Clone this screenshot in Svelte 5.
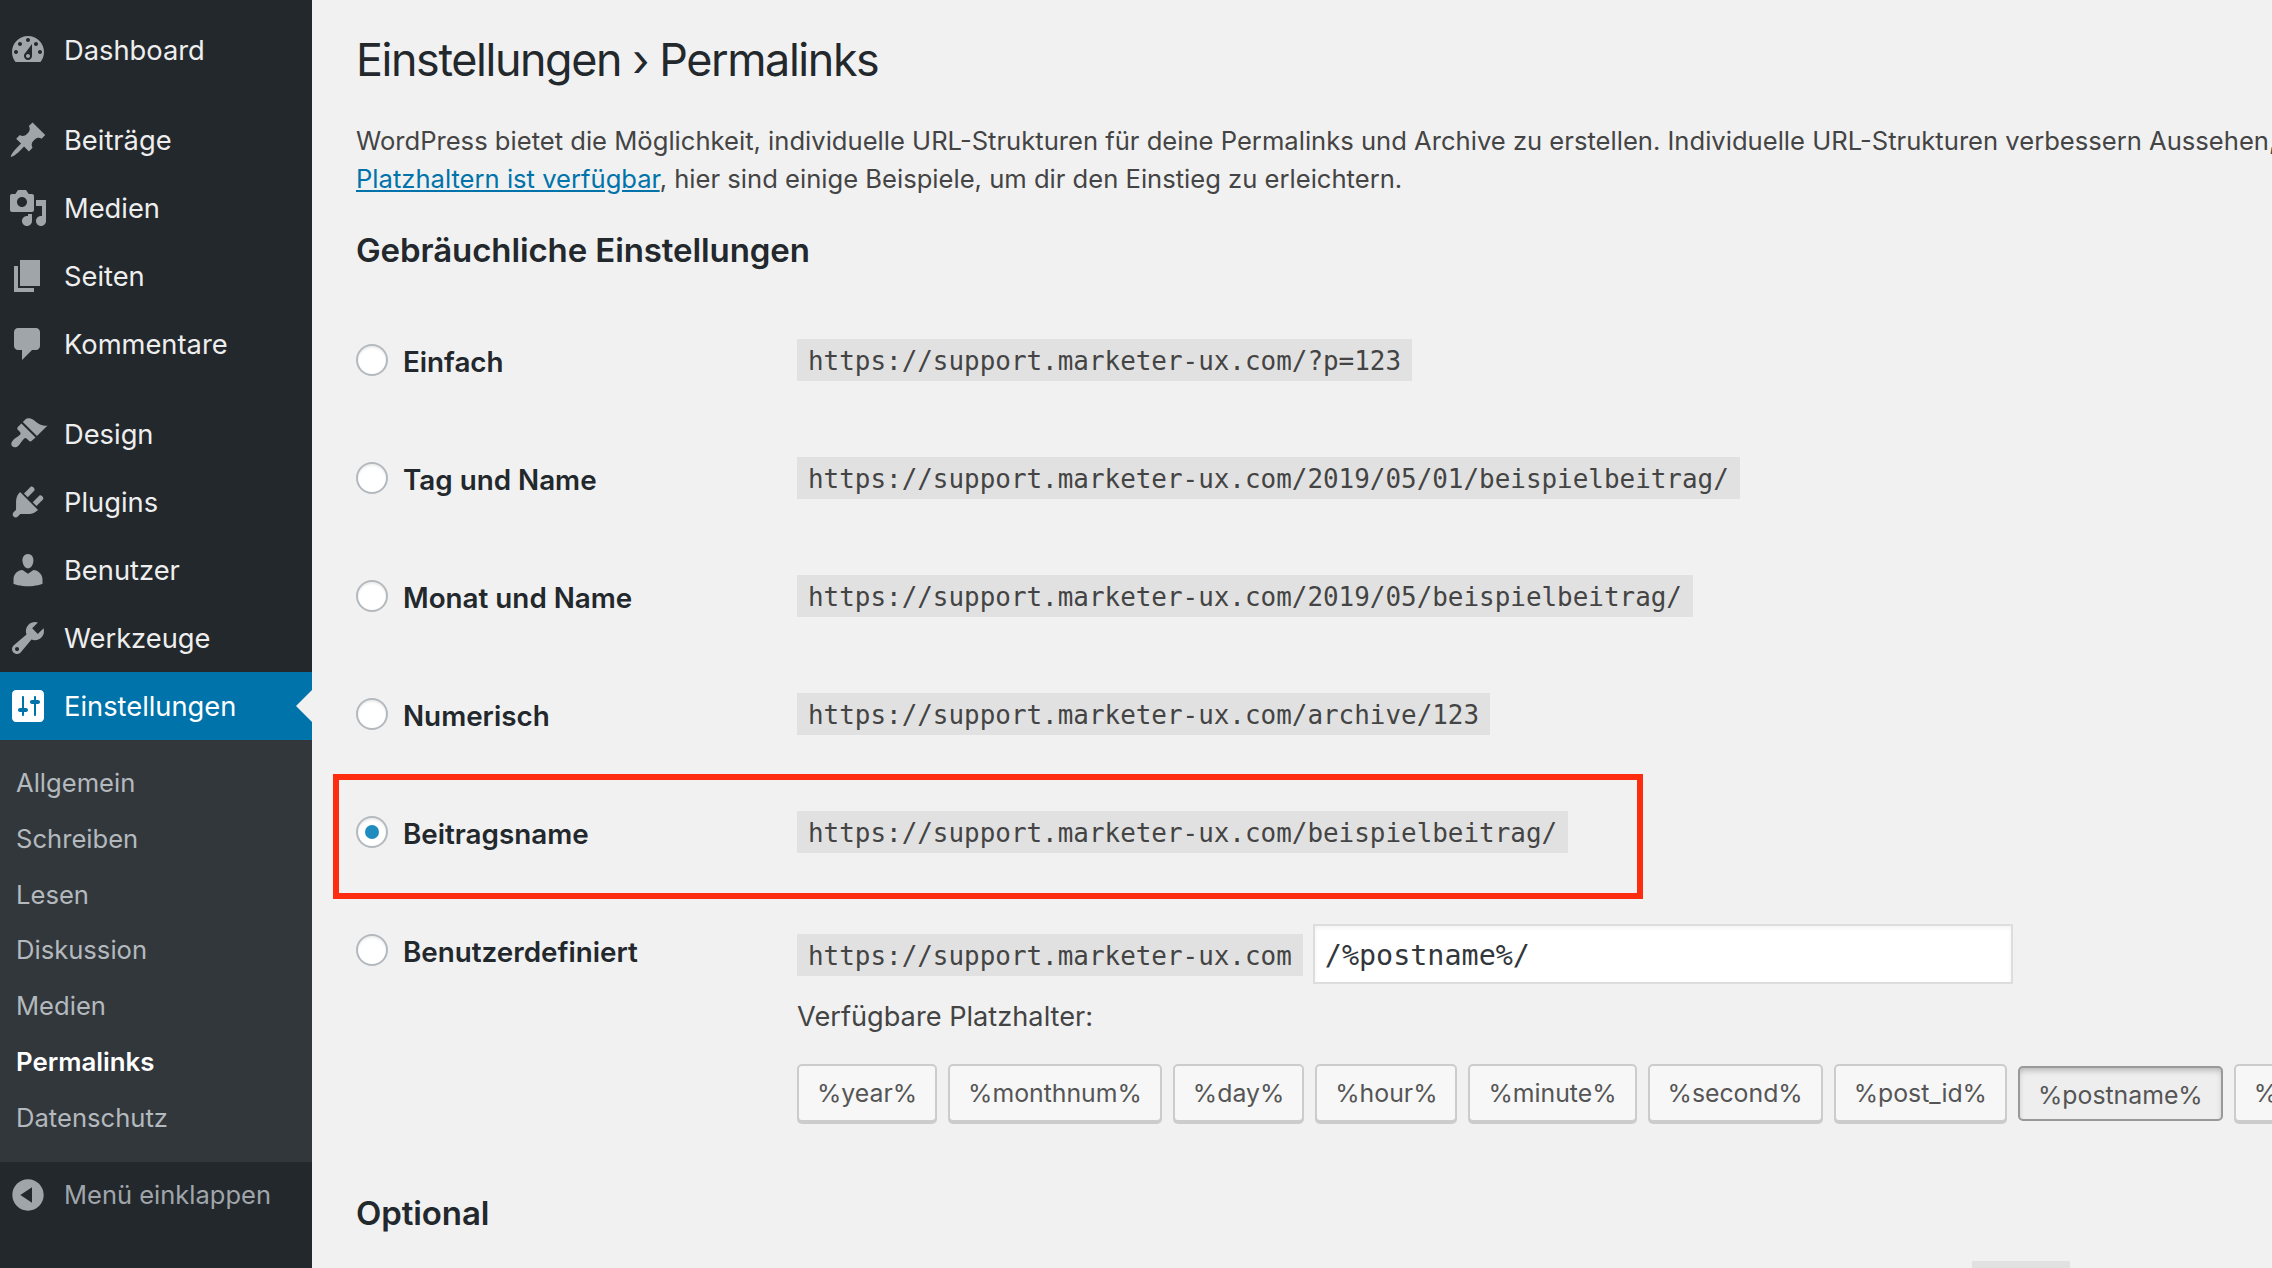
<script>
  const icons = {
    dashboard: 'M3.76 16h12.48c1.1-1.37 1.76-3.11 1.76-5 0-4.42-3.58-8-8-8s-8 3.58-8 8c0 1.89.66 3.63 1.76 5zM10 4c.55 0 1 .45 1 1s-.45 1-1 1-1-.45-1-1 .45-1 1-1zM6 6c.55 0 1 .45 1 1s-.45 1-1 1-1-.45-1-1 .45-1 1-1zm8 0c.55 0 1 .45 1 1s-.45 1-1 1-1-.45-1-1 .45-1 1-1zm-5.37 5.55L12 7v6c0 1.1-.9 2-2 2s-2-.9-2-2c0-.57.24-1.08.63-1.45zM4 10c.55 0 1 .45 1 1s-.45 1-1 1-1-.45-1-1 .45-1 1-1zm12 0c.55 0 1 .45 1 1s-.45 1-1 1-1-.45-1-1 .45-1 1-1zm-5 3c0-.55-.45-1-1-1s-1 .45-1 1 .45 1 1 1 1-.45 1-1z',
    post: 'M10.44 3.02l1.82-1.82 6.36 6.35-1.83 1.82c-1.05-.68-2.48-.57-3.41.36l-.75.75c-.92.93-1.04 2.35-.35 3.41l-1.83 1.82-2.41-2.41-2.8 2.79c-.42.42-3.38 2.71-3.8 2.29s1.86-3.39 2.28-3.81l2.79-2.79L4.1 9.36l1.83-1.82c1.05.69 2.48.57 3.4-.36l.75-.75c.93-.92 1.05-2.35.36-3.41z',
    media: 'M13 11V4c0-.55-.45-1-1-1h-1.67L9 1H5L3.67 3H2c-.55 0-1 .45-1 1v7c0 .55.45 1 1 1h10c.55 0 1-.45 1-1zM7 4.5c1.38 0 2.5 1.12 2.5 2.5S8.38 9.5 7 9.5 4.5 8.38 4.5 7 5.62 4.5 7 4.5zM14 6h5v10.5c0 1.38-1.12 2.5-2.5 2.5S14 17.88 14 16.5s1.12-2.5 2.5-2.5c.17 0 .34.02.5.05V9h-3V6zm-4 8.05V13h2v3.5c0 1.38-1.12 2.5-2.5 2.5S7 17.88 7 16.5 8.12 14 9.5 14c.17 0 .34.02.5.05z',
    page: 'M6 15V2h10v13H6zm-1 1h8v2H3V5h2v11z',
    comments: 'M5 2h9c1.1 0 2 .9 2 2v7c0 1.1-.9 2-2 2h-2l-5 5v-5H5c-1.1 0-2-.9-2-2V4c0-1.1.9-2 2-2z',
    appearance: 'M14.48 11.06L7.41 3.99l1.5-1.5c.5-.56 2.3-.47 3.51.32 1.21.8 1.43 1.28 2.91 2.1 1.18.64 2.45 1.26 4.45.85zm-.71.71L6.7 4.7 4.93 6.47c-.39.39-.39 1.02 0 1.41l1.06 1.06c.39.39.39 1.03 0 1.42-.6.6-1.43 1.11-2.21 1.69-.35.26-.7.53-1.01.84-1.34 1.34-1.34 2.54-.6 3.28.74.74 1.94.74 3.28-.6.31-.31.58-.66.84-1.01.58-.78 1.09-1.61 1.69-2.21.39-.39 1.03-.39 1.42 0l1.06 1.06c.39.39 1.02.39 1.41 0z',
    plugins: 'M13.11 4.36L9.87 7.6 8 5.73l3.24-3.24c.35-.34 1.05-.2 1.56.32.52.51.66 1.21.31 1.55zm-8 1.77l.91-1.12 9.01 9.01-1.19.84c-.71.71-2.63 1.16-3.82 1.16H6.14L4.9 17.26c-.59.59-1.54.59-2.12 0-.59-.58-.59-1.53 0-2.12l1.24-1.24v-3.88c0-1.13.4-3.19 1.09-3.89zm7.26 3.97l3.24-3.24c.34-.35 1.04-.21 1.55.31.52.51.66 1.21.31 1.55l-3.24 3.25z',
    users: 'M10 9.25c-2.27 0-2.73-3.44-2.73-3.44C7 4.02 7.82 2 9.97 2c2.16 0 2.98 2.02 2.71 3.81 0 0-.41 3.44-2.68 3.44zm0 2.57L12.72 10c2.39 0 4.52 2.33 4.52 4.53v2.49s-3.65 1.13-7.24 1.13c-3.65 0-7.24-1.13-7.24-1.13v-2.49c0-2.25 1.94-4.48 4.47-4.48z',
    tools: 'M16.68 9.77c-1.34 1.34-3.3 1.67-4.95.99l-5.41 6.52c-.99.99-2.59.99-3.58 0s-.99-2.59 0-3.57l6.52-5.42c-.68-1.65-.35-3.61.99-4.95 1.28-1.28 3.12-1.62 4.72-1.06l-2.89 2.89 2.82 2.82 2.86-2.87c.53 1.58.18 3.39-1.08 4.65zM3.81 16.21c.4.39 1.04.39 1.43 0 .4-.4.4-1.04 0-1.43-.39-.4-1.03-.4-1.43 0-.39.39-.39 1.03 0 1.43z',
    settings: 'M18 16V4c0-1.1-.9-2-2-2H4c-1.1 0-2 .9-2 2v12c0 1.1.9 2 2 2h12c1.1 0 2-.9 2-2zM8 11h1c.55 0 1 .45 1 1s-.45 1-1 1H8v1.5c0 .28-.22.5-.5.5s-.5-.22-.5-.5V13H6c-.55 0-1-.45-1-1s.45-1 1-1h1V5.5c0-.28.22-.5.5-.5s.5.22.5.5V11zm5-2h-1c-.55 0-1-.45-1-1s.45-1 1-1h1V5.5c0-.28.22-.5.5-.5s.5.22.5.5V7h1c.55 0 1 .45 1 1s-.45 1-1 1h-1v5.5c0 .28-.22.5-.5.5s-.5-.22-.5-.5V9z',
    collapse: 'M10 2.16c4.33 0 7.84 3.51 7.84 7.84s-3.51 7.84-7.84 7.84S2.16 14.33 2.16 10 5.71 2.16 10 2.16zm2 11.72V6.12L6.18 9.97z'
  };
  const groups = [
    [['dashboard', 'Dashboard']],
    [['post', 'Beiträge'], ['media', 'Medien'], ['page', 'Seiten'], ['comments', 'Kommentare']],
    [['appearance', 'Design'], ['plugins', 'Plugins'], ['users', 'Benutzer'], ['tools', 'Werkzeuge']]
  ];
  const sub = ['Allgemein', 'Schreiben', 'Lesen', 'Diskussion', 'Medien', 'Permalinks', 'Datenschutz'];
  const options = [
    ['Einfach', 'https://support.marketer-ux.com/?p=123', false],
    ['Tag und Name', 'https://support.marketer-ux.com/2019/05/01/beispielbeitrag/', false],
    ['Monat und Name', 'https://support.marketer-ux.com/2019/05/beispielbeitrag/', false],
    ['Numerisch', 'https://support.marketer-ux.com/archive/123', false],
    ['Beitragsname', 'https://support.marketer-ux.com/beispielbeitrag/', true]
  ];
  const tags = ['%year%', '%monthnum%', '%day%', '%hour%', '%minute%', '%second%', '%post_id%', '%postname%', '%category%'];
</script>

<div class="shell">
  <nav class="side">
    <div class="menu">
      {#each groups as group}
        <ul class="group">
          {#each group as [icon, label]}
            <li class="item">
              <svg class="ico" viewBox="0 0 20 20"><path fill-rule="evenodd" d={icons[icon]} /></svg>
              <span>{label}</span>
            </li>
          {/each}
        </ul>
      {/each}
      <div class="item current">
        <svg class="ico" viewBox="0 0 20 20"><path fill-rule="evenodd" d={icons.settings} /></svg>
        <span>Einstellungen</span>
        <i class="arrow"></i>
      </div>
      <ul class="sub">
        {#each sub as s}
          <li class:on={s === 'Permalinks'}>{s}</li>
        {/each}
      </ul>
    </div>
    <div class="collapse">
      <svg class="ico" viewBox="0 0 20 20"><path fill-rule="evenodd" d={icons.collapse} /></svg>
      <span>Menü einklappen</span>
    </div>
  </nav>

  <main class="main">
    <h1>Einstellungen › Permalinks</h1>
    <p class="intro">WordPress bietet die Möglichkeit, individuelle URL-Strukturen für deine Permalinks und Archive zu erstellen. Individuelle URL-Strukturen verbessern Aussehen,<br /><a href="#top">Platzhaltern ist verfügbar</a>, hier sind einige Beispiele, um dir den Einstieg zu erleichtern.</p>
    <h2>Gebräuchliche Einstellungen</h2>
    <div class="form">
      {#each options as [label, url, checked]}
        <div class="row">
          <div class="choice"><span class="radio" class:checked></span><b>{label}</b></div>
          <div><code>{url}</code></div>
        </div>
      {/each}
      <div class="row custom">
        <div class="choice"><span class="radio"></span><b>Benutzerdefiniert</b></div>
        <div class="fields">
          <div class="prefix">
            <code>https://support.marketer-ux.com</code>
            <input class="struct" value="/%postname%/" />
          </div>
          <div class="avail">Verfügbare Platzhalter:</div>
          <div class="tags">
            {#each tags as t}
              <button class="tag" class:active={t === '%postname%'}>{t}</button>
            {/each}
          </div>
        </div>
      </div>
      <i class="mark"></i>
    </div>
    <h2 class="opt">Optional</h2>
    <div class="stub"></div>
  </main>
</div>

<style>
  :global(body) { margin: 0; overflow: hidden; background: #f1f1f1; }
  ul { list-style: none; margin: 0; padding: 0; }
  .shell { display: flex; height: 1268px; overflow: hidden; font-family: Inter, "Liberation Sans", sans-serif; color: #444; }

  .side { flex: 0 0 312px; width: 312px; display: flex; flex-direction: column; background: #23282d; }
  .menu { padding-top: 16px; }
  .group { margin-bottom: 22px; }
  .group:nth-of-type(3) { margin-bottom: 0; }
  .item { position: relative; display: flex; align-items: center; height: 68px; padding-left: 8px; gap: 16px; font-size: 27.3px; color: #eee; }
  .ico { width: 40px; height: 40px; flex: none; fill: #a0a5aa; }
  .current { background: #0073aa; color: #fff; }
  .current .ico { fill: #fff; }
  .arrow { position: absolute; right: 0; top: 18px; border: 16px solid transparent; border-left: 0; border-right-color: #f1f1f1; }
  .sub { background: #32373c; padding: 15px 0 16px; }
  .sub li { height: 55.8px; line-height: 56.6px; padding-left: 16px; font-size: 25.6px; color: #b4b9be; }
  .sub .on { color: #fff; font-weight: 600; font-size: 25.8px; }
  .collapse { flex: 1; display: flex; align-items: center; align-self: stretch; height: 66px; max-height: 66px; padding-left: 8px; gap: 16px; font-size: 25.5px; color: #a0a5aa; }

  .main { flex: 1; min-width: 0; padding: 31px 0 0 44px; }
  h1 { margin: 0; font-size: 44.85px; line-height: 58px; font-weight: 400; letter-spacing: -1.4px; color: #23282d; white-space: nowrap; }
  .intro { margin: 33px 0 0; font-size: 25.6px; line-height: 38px; color: #444; white-space: nowrap; }
  .intro a { color: #0073aa; }
  h2 { margin: 30px 0 0; font-size: 33px; line-height: 44px; font-weight: 600; letter-spacing: -0.1px; color: #23282d; }
  .form { position: relative; margin-top: 29px; }
  .row { display: grid; grid-template-columns: 441px 1fr; align-items: center; height: 118px; }
  .choice { display: flex; align-items: center; gap: 15px; height: 118px; }
  .choice b { font-size: 27.8px; font-weight: 600; color: #23282d; position: relative; top: 2px; }
  .radio { box-sizing: border-box; width: 32px; height: 32px; border: 2px solid #b4b9be; border-radius: 50%; background: #fff; display: flex; align-items: center; justify-content: center; box-shadow: inset 0 2px 2px rgba(0,0,0,.07); }
  .radio.checked::after { content: ""; width: 14px; height: 14px; border-radius: 50%; background: #1e8cbe; }
  code { display: inline-block; height: 42px; line-height: 44px; padding: 0 11px 0 11px; background: #e1e1e1; font-family: "DejaVu Sans Mono", "Liberation Mono", monospace; font-size: 25.93px; color: #444; white-space: nowrap; vertical-align: top; }

  .custom { height: auto; align-items: start; }
  .fields { padding-top: 33px; min-width: 0; }
  .prefix { display: flex; align-items: center; gap: 10px; }
  .prefix code { margin-top: 2px; }
  .struct { box-sizing: border-box; width: 700px; height: 60px; padding: 2px 10px 0; border: 2px solid #ddd; background: #fff; font-family: "DejaVu Sans Mono", monospace; font-size: 28.4px; color: #32373c; outline: 0; box-shadow: inset 0 2px 4px rgba(0,0,0,.05); }
  .avail { margin-top: 14px; font-size: 27.2px; line-height: 38px; color: #444; }
  .tags { display: flex; gap: 11px; margin-top: 28px; align-items: flex-start; white-space: nowrap; }
  .tag { box-sizing: border-box; height: 58px; padding: 0 18px; flex: none; border: 2px solid #ccc; border-radius: 5px; background: #f7f7f7; box-shadow: 0 2px 0 #ccc; font-family: inherit; font-size: 24.8px; color: #555; }
  .tag.active { height: 55px; margin-top: 2px; padding-top: 3px; border-color: #999; background: #eee; box-shadow: inset 0 4px 6px -2px rgba(0,0,0,.25); }
  .mark { position: absolute; left: -23px; top: 473px; width: 1310px; height: 125px; box-sizing: border-box; border: 6px solid #ff2d0f; }
  .opt { margin-top: 69px; }
  .stub { margin: 26px 0 0 1616px; width: 98px; height: 42px; background: #e1e1e1; }
</style>
